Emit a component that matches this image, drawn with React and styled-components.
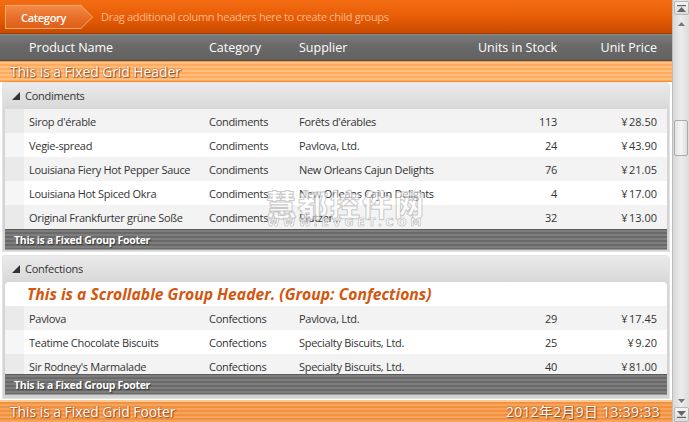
import React from "react";
import styled, { createGlobalStyle } from "styled-components";

const Global = createGlobalStyle`
  html, body { margin: 0; padding: 0; background: #fff; }
  body { font-family: "Open Sans", "Noto Sans", sans-serif; overflow: hidden; }
  * { box-sizing: border-box; }
`;

const Window = styled.div`
  width: 689px;
  height: 422px;
  display: flex;
  position: relative;
  overflow: hidden;
`;

const Main = styled.div`
  width: 672px;
  display: flex;
  flex-direction: column;
`;

const GroupByPanel = styled.div`
  height: 34px;
  display: flex;
  align-items: center;
  gap: 8px;
  padding-left: 5px;
  background: linear-gradient(#f46c12, #e65c06 55%, #c94a00);
  border-bottom: 1px solid #9a3c00;
`;

const ChipOuter = styled.div`
  width: 88px;
  height: 24px;
  padding: 1px;
  background: #f7a868;
  clip-path: polygon(0 0, 76px 0, 100% 50%, 76px 100%, 0 100%);
  margin-top: 1px;
`;

const ChipInner = styled.div`
  height: 100%;
  display: flex;
  align-items: center;
  padding-left: 15px;
  color: #fff;
  font-size: 11px;
  font-weight: 600;
  letter-spacing: -0.3px;
  background: linear-gradient(#f28a46, #e8702a 50%, #de5f18);
  clip-path: polygon(0 0, 75px 0, 100% 50%, 75px 100%, 0 100%);
`;

const Hint = styled.span`
  color: #fbb88a;
  font-size: 11px;
  letter-spacing: -0.3px;
`;

const cols = "180px 90px 1fr 100px 100px";

const ColumnHeader = styled.div`
  height: 27px;
  display: grid;
  grid-template-columns: 24px ${cols} 10px;
  align-items: center;
  background: linear-gradient(#7a7a7a, #6a6a6a 40%, #626262);
  border-top: 1px solid #8a8a8a;
  border-bottom: 1px solid #4c4c4c;
  color: #fff;
  font-size: 12.5px;
`;

const HeadCell = styled.div`
  padding: 0 5px;
  text-align: ${(p) => (p.$right ? "right" : "left")};
  white-space: nowrap;
`;

const FixedGridHeader = styled.div`
  height: 21px;
  display: flex;
  align-items: center;
  padding-left: 10px;
  color: #fff;
  font-size: 13.8px;
  text-shadow: 0 0 2px #9a4a10, 1px 1px 1px #9a4a10;
  background: repeating-linear-gradient(#ffbf7e 0 2px, #ffaa5e 2px 4px);
  border-top: 1px solid #ff9a40;
  border-bottom: 1px solid #ff8c30;
`;

const ScrollArea = styled.div`
  flex: 1;
  overflow: hidden;
  padding: 0 2px;
  display: flex;
  flex-direction: column;
  gap: 3px;
  background: #fff;
  position: relative;
`;

const GroupPanel = styled.div`
  flex-shrink: 0;
  padding: 0 3px ${(p) => p.$pb}px 3px;
  border-radius: 3px 5px 0 0;
  background: linear-gradient(#ebebeb, #d6d6d6 30px, #d2d2d2);
  box-shadow: inset 0 0 0 1px #e4e4e4;
`;

const GroupHeader = styled.div`
  height: 27px;
  display: flex;
  align-items: center;
  gap: 5px;
  padding-left: 7px;
  color: #333;
  font-size: 11px;
  letter-spacing: -0.25px;
`;

const Body = styled.div`
  height: ${(p) => (p.$h ? `${p.$h}px` : "auto")};
  overflow: hidden;
`;

const Row = styled.div`
  height: 24px;
  display: grid;
  grid-template-columns: 19px ${cols} 5px;
  align-items: center;
  background: ${(p) => (p.$alt ? "#ffffff" : "#f3f3f3")};
  color: #333;
  font-size: 11px;
  letter-spacing: -0.3px;
`;

const Indent = styled.div`
  align-self: stretch;
  background: rgba(0, 0, 0, 0.035);
`;

const Cell = styled.div`
  padding: 0 5px;
  white-space: nowrap;
  text-align: ${(p) => (p.$right ? "right" : "left")};
`;

const ScrollableHeader = styled.div`
  height: 24px;
  display: flex;
  align-items: center;
  padding-left: 22px;
  background: #fff;
  border-radius: 4px 4px 0 0;
  color: #d4560f;
  font-size: 15.7px;
  font-weight: 700;
  font-style: italic;
`;

const GroupFooter = styled.div`
  height: 21px;
  display: flex;
  align-items: center;
  padding-left: 9px;
  color: #fff;
  font-size: 10.5px;
  font-weight: 700;
  letter-spacing: -0.3px;
  text-shadow: 1px 1px 1px #333;
  background: repeating-linear-gradient(#7e7e7e 0 2px, #6a6a6a 2px 4px);
  border-top: 1px solid #5a5a5a;
  border-bottom: 1px solid #9a9a9a;
`;

const FixedGridFooter = styled.div`
  height: 22px;
  display: flex;
  align-items: center;
  justify-content: space-between;
  padding: 0 12px 0 10px;
  color: #fff;
  font-size: 13.8px;
  font-family: "Open Sans", "Noto Sans CJK SC", sans-serif;
  text-shadow: 0 0 2px #a54a10, 1px 1px 1px #a54a10;
  background: repeating-linear-gradient(#f7a45c 0 2px, #f2913f 2px 4px);
  box-shadow: inset 0 2px 0 #ffc890;
`;

const DateText = styled.span`
  letter-spacing: 0.4px;
`;

const Scrollbar = styled.div`
  width: 17px;
  display: flex;
  flex-direction: column;
  align-items: center;
  background: linear-gradient(90deg, #d8d8d8, #ececec 50%, #dcdcdc);
  border-left: 1px solid #bdbdbd;
`;

const SbButton = styled.div`
  width: 15px;
  height: ${(p) => p.$h}px;
  margin-top: ${(p) => p.$mt || 0}px;
  display: flex;
  align-items: center;
  justify-content: center;
  background: ${(p) => (p.$box ? "linear-gradient(#f4f4f4, #dcdcdc)" : "transparent")};
  border: ${(p) => (p.$box ? "1px solid #b8b8b8" : "none")};
  border-radius: 2px;
`;

const Track = styled.div`
  flex: 1;
  width: 100%;
  display: flex;
  flex-direction: column;
  align-items: center;
`;

const Spacer = styled.div`
  flex: 1;
`;

const Thumb = styled.div`
  width: 14px;
  height: 36px;
  margin-top: 90px;
  border: 1px solid #aaa;
  border-radius: 2px;
  background: linear-gradient(90deg, #e4e4e4, #f6f6f6 50%, #dedede);
`;

const Watermark = styled.div`
  position: absolute;
  left: 266px;
  top: 106px;
  display: flex;
  flex-direction: column;
  align-items: center;
  pointer-events: none;
  line-height: 1;
`;

const WmBig = styled.div`
  font-family: "Noto Sans CJK SC", sans-serif;
  font-weight: 900;
  font-size: 30px;
  letter-spacing: 2px;
  color: rgba(255, 255, 255, 0.6);
  -webkit-text-stroke: 1px rgba(160, 160, 160, 0.55);
`;

const WmSmall = styled.div`
  font-family: "DejaVu Sans", sans-serif;
  font-weight: 700;
  font-size: 11px;
  letter-spacing: 3.6px;
  color: rgba(255, 255, 255, 0.7);
  -webkit-text-stroke: 0.6px rgba(150, 150, 150, 0.7);
  margin-top: -1px;
`;

const Triangle = () => (
  <svg width="8" height="8" viewBox="0 0 8 8">
    <polygon points="8,0 8,8 0,8" fill="#333" />
  </svg>
);

const Arrow = ({ up }) => (
  <svg width="7" height="4" viewBox="0 0 7 4">
    <polygon points={up ? "0,4 7,4 3.5,0" : "0,0 7,0 3.5,4"} fill="#777" />
  </svg>
);

const EndIcon = ({ up }) => (
  <svg width="9" height="7" viewBox="0 0 9 7">
    {up ? (
      <>
        <rect x="0" y="0" width="9" height="1.2" fill="#666" />
        <polygon points="0,7 9,7 4.5,2" fill="#666" />
      </>
    ) : (
      <>
        <polygon points="0,0 9,0 4.5,5" fill="#666" />
        <rect x="0" y="5.8" width="9" height="1.2" fill="#666" />
      </>
    )}
  </svg>
);

const Y = "¥\u202F";

const condiments = [
  ["Sirop d'érable", "Condiments", "Forêts d'érables", "113", Y + "28.50"],
  ["Vegie-spread", "Condiments", "Pavlova, Ltd.", "24", Y + "43.90"],
  ["Louisiana Fiery Hot Pepper Sauce", "Condiments", "New Orleans Cajun Delights", "76", Y + "21.05"],
  ["Louisiana Hot Spiced Okra", "Condiments", "New Orleans Cajun Delights", "4", Y + "17.00"],
  ["Original Frankfurter grüne Soße", "Condiments", "Plutzer...", "32", Y + "13.00"],
];

const confections = [
  ["Pavlova", "Confections", "Pavlova, Ltd.", "29", Y + "17.45"],
  ["Teatime Chocolate Biscuits", "Confections", "Specialty Biscuits, Ltd.", "25", Y + "9.20"],
  ["Sir Rodney's Marmalade", "Confections", "Specialty Biscuits, Ltd.", "40", Y + "81.00"],
];

const DataRow = ({ r, i }) => (
  <Row $alt={i % 2 === 1}>
    <Indent />
    <Cell>{r[0]}</Cell>
    <Cell>{r[1]}</Cell>
    <Cell>{r[2]}</Cell>
    <Cell $right>{r[3]}</Cell>
    <Cell $right>{r[4]}</Cell>
    <span />
  </Row>
);

export default function App() {
  return (
    <>
      <Global />
      <Window>
        <Main>
          <GroupByPanel>
            <ChipOuter>
              <ChipInner>Category</ChipInner>
            </ChipOuter>
            <Hint>Drag additional column headers here to create child groups</Hint>
          </GroupByPanel>
          <ColumnHeader>
            <span />
            <HeadCell>Product Name</HeadCell>
            <HeadCell>Category</HeadCell>
            <HeadCell>Supplier</HeadCell>
            <HeadCell $right>Units in Stock</HeadCell>
            <HeadCell $right>Unit Price</HeadCell>
            <span />
          </ColumnHeader>
          <FixedGridHeader>This is a Fixed Grid Header</FixedGridHeader>
          <ScrollArea>
            <GroupPanel $pb={2}>
              <GroupHeader>
                <Triangle />
                Condiments
              </GroupHeader>
              <Body>
                {condiments.map((r, i) => (
                  <DataRow key={i} r={r} i={i} />
                ))}
              </Body>
              <GroupFooter>This is a Fixed Group Footer</GroupFooter>
            </GroupPanel>
            <GroupPanel $pb={4}>
              <GroupHeader>
                <Triangle />
                Confections
              </GroupHeader>
              <Body $h={92}>
                <ScrollableHeader>This is a Scrollable Group Header. (Group: Confections)</ScrollableHeader>
                {confections.map((r, i) => (
                  <DataRow key={i} r={r} i={i} />
                ))}
              </Body>
              <GroupFooter>This is a Fixed Group Footer</GroupFooter>
            </GroupPanel>
            <Watermark>
              <WmBig>慧都控件网</WmBig>
              <WmSmall>WWW.EVGET.COM</WmSmall>
            </Watermark>
          </ScrollArea>
          <FixedGridFooter>
            <span>This is a Fixed Grid Footer</span>
            <DateText>2012年2月9日 13:39:33</DateText>
          </FixedGridFooter>
        </Main>
        <Scrollbar>
          <SbButton $box $h={14} $mt={1}>
            <EndIcon up />
          </SbButton>
          <Track>
            <SbButton $h={12} $mt={3}>
              <Arrow up />
            </SbButton>
            <Thumb />
            <Spacer />
            <SbButton $h={12}>
              <Arrow />
            </SbButton>
          </Track>
          <SbButton $box $h={15}>
            <EndIcon />
          </SbButton>
        </Scrollbar>
      </Window>
    </>
  );
}
